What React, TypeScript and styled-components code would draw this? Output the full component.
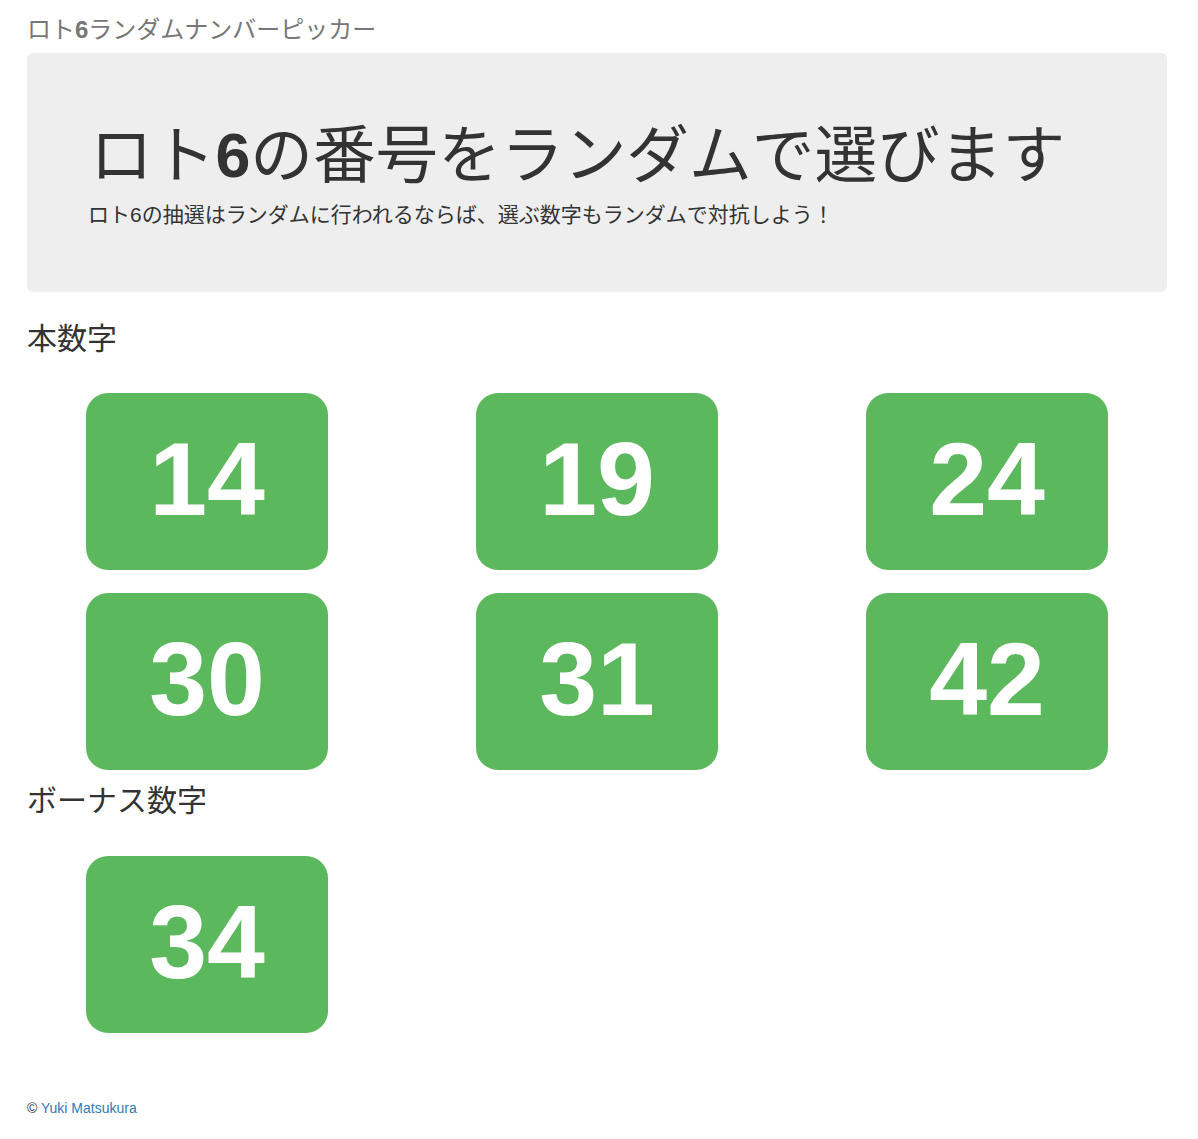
import styled, { createGlobalStyle } from "styled-components";

const GlobalStyle = createGlobalStyle`
  body {
    margin: 0;
    background: #fff;
    color: #333;
    font-family: "Liberation Sans", "Noto Sans CJK JP", sans-serif;
    font-size: 14px;
    line-height: 1.42857;
  }
`;

const Page = styled.div`
  width: 1140px;
  margin-left: 27px;
  padding-top: 17px;
`;

const Brand = styled.div`
  font-size: 24px;
  line-height: 26px;
  color: #777;
  margin-bottom: 10px;
`;

const Bold = styled.span`
  font-weight: 700;
`;

const Jumbotron = styled.div`
  background: #eee;
  border-radius: 6px;
  padding: 48px 60px;
  margin-bottom: 30px;
`;

const Lead = styled.h1`
  margin: 20px 0 10px 3px;
  font-size: 62.7px;
  line-height: 69px;
  font-weight: 400;
  color: #333;
`;

const Sub = styled.p`
  margin: 0 0 15px 1px;
  font-size: 21px;
  line-height: 29px;
  font-weight: 400;
  color: #333;
`;

const SectionTitle = styled.h2<{ $top?: number }>`
  margin: ${(p) => p.$top ?? 0}px 0 0;
  font-size: 30px;
  line-height: 33px;
  font-weight: 400;
`;

const NumberGrid = styled.div<{ $top: number }>`
  display: grid;
  grid-template-columns: repeat(3, 360px);
  column-gap: 30px;
  row-gap: 23px;
  justify-items: center;
  margin-top: ${(p) => p.$top}px;
`;

const Ball = styled.div`
  width: 242px;
  height: 177px;
  border-radius: 22px;
  background: #5cb85c;
  color: #fff;
  display: flex;
  align-items: center;
  justify-content: center;
  font-family: "Liberation Sans", Arial, sans-serif;
  font-weight: 700;
  font-size: 104px;
  line-height: 1;
  padding-bottom: 5px;
  box-sizing: border-box;
`;

const Footer = styled.footer`
  margin-top: 65px;
  font-size: 14px;
  line-height: 20px;
  color: #333;
`;

const Link = styled.a`
  color: #337ab7;
  text-decoration: none;
`;

const mainNumbers = [14, 19, 24, 30, 31, 42];
const bonusNumbers = [34];

const App = () => {
  return (
    <>
      <GlobalStyle />
      <Page>
        <Brand>
          ロト<Bold>6</Bold>ランダムナンバーピッカー
        </Brand>
        <Jumbotron>
          <Lead>
            ロト<Bold>6</Bold>の番号をランダムで選びます
          </Lead>
          <Sub>ロト6の抽選はランダムに行われるならば、選ぶ数字もランダムで対抗しよう！</Sub>
        </Jumbotron>

        <SectionTitle>本数字</SectionTitle>
        <NumberGrid $top={38}>
          {mainNumbers.map((n) => (
            <Ball key={n}>{n}</Ball>
          ))}
        </NumberGrid>

        <SectionTitle $top={14}>ボーナス数字</SectionTitle>
        <NumberGrid $top={39}>
          {bonusNumbers.map((n) => (
            <Ball key={n}>{n}</Ball>
          ))}
        </NumberGrid>

        <Footer>
          © <Link href="#">Yuki Matsukura</Link>
        </Footer>
      </Page>
    </>
  );
};

export default App;
